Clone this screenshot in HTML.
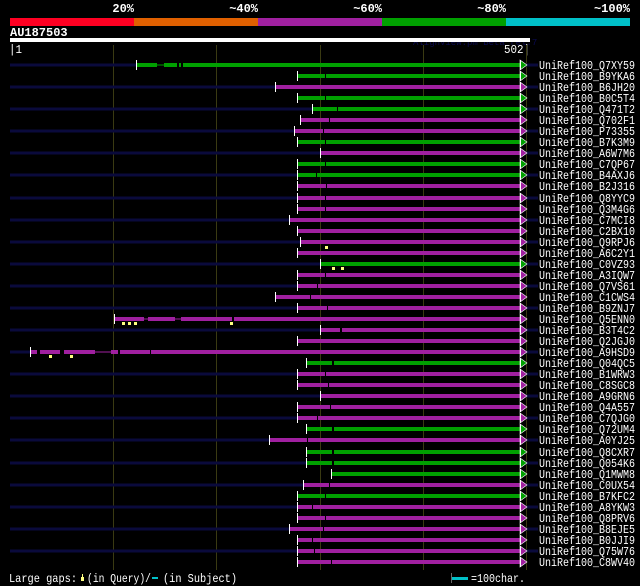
<!DOCTYPE html>
<html><head><meta charset="utf-8"><style>
html,body{margin:0;padding:0;background:#000;width:640px;height:586px;overflow:hidden}
svg{display:block}
text{font-family:"Liberation Mono","DejaVu Sans Mono",monospace;fill:#fff}
.l{font-size:12px}
</style></head><body>
<svg width="640" height="586" viewBox="0 0 640 586" xmlns="http://www.w3.org/2000/svg">
<rect width="640" height="586" fill="#000"/>
<g font-size="12" font-weight="bold">
<text x="134" y="12" text-anchor="end">20%</text>
<text x="258" y="12" text-anchor="end">~40%</text>
<text x="382" y="12" text-anchor="end">~60%</text>
<text x="506" y="12" text-anchor="end">~80%</text>
<text x="630" y="12" text-anchor="end">~100%</text>
</g>
<rect x="10" y="18" width="124" height="8" fill="#ff0022"/>
<rect x="134" y="18" width="124" height="8" fill="#e06000"/>
<rect x="258" y="18" width="124" height="8" fill="#a020a0"/>
<rect x="382" y="18" width="124" height="8" fill="#00a000"/>
<rect x="506" y="18" width="124" height="8" fill="#00c0c8"/>
<text x="10" y="36" font-size="12" font-weight="bold">AU187503</text>
<text x="413" y="45" font-size="9" style="fill:#0a0a50">AlignView.pm Beta rel.7</text>
<rect x="10" y="38" width="520" height="4" fill="#fff"/>
<text x="9" y="53" font-size="12" textLength="13" lengthAdjust="spacingAndGlyphs">|1</text>
<text x="504" y="53" font-size="12" textLength="26" lengthAdjust="spacingAndGlyphs">502|</text>
<g stroke="#3a3a12" stroke-width="1">
<line x1="113.5" y1="45" x2="113.5" y2="570"/>
<line x1="216.5" y1="45" x2="216.5" y2="570"/>
<line x1="320.5" y1="45" x2="320.5" y2="570"/>
<line x1="423.5" y1="45" x2="423.5" y2="570"/>
<line x1="526.5" y1="45" x2="526.5" y2="570"/>
</g>
<defs>
<g id="nv"><rect x="10" y="-1.5" width="528" height="3" fill="#0a0a3c"/></g>
<g id="ag"><polygon points="520,-5 527,0 520,5" fill="#00a000" stroke="#fff" stroke-width="0.6"/><line x1="520.5" y1="-5" x2="520.5" y2="5" stroke="#fff"/></g>
<g id="ap"><polygon points="520,-5 527,0 520,5" fill="#a020a0" stroke="#fff" stroke-width="0.6"/><line x1="520.5" y1="-5" x2="520.5" y2="5" stroke="#fff"/></g>
</defs>
<g class="l">
<g transform="translate(0,65)"><use href="#nv"/><rect x="136" y="-2" width="384" height="4" fill="#00a000"/><rect x="157" y="-2" width="7" height="4" fill="#000"/><rect x="157" y="-0.5" width="7" height="1" fill="#00a000"/><rect x="177" y="-2" width="2" height="4" fill="#000"/><rect x="181" y="-2" width="2" height="4" fill="#000"/><line x1="136.5" y1="-5" x2="136.5" y2="5" stroke="#fff"/><use href="#ag"/><text x="539" y="4" textLength="96" lengthAdjust="spacingAndGlyphs">UniRef100_Q7XY59</text></g>
<g transform="translate(0,76)"><rect x="297" y="-2" width="223" height="4" fill="#00a000"/><rect x="325" y="-2" width="1" height="4" fill="#000"/><line x1="297.5" y1="-5" x2="297.5" y2="5" stroke="#fff"/><use href="#ag"/><text x="539" y="4" textLength="96" lengthAdjust="spacingAndGlyphs">UniRef100_B9YKA6</text></g>
<g transform="translate(0,87)"><use href="#nv"/><rect x="275" y="-2" width="245" height="4" fill="#a020a0"/><line x1="275.5" y1="-5" x2="275.5" y2="5" stroke="#fff"/><use href="#ap"/><text x="539" y="4" textLength="96" lengthAdjust="spacingAndGlyphs">UniRef100_B6JH20</text></g>
<g transform="translate(0,98)"><rect x="297" y="-2" width="223" height="4" fill="#00a000"/><rect x="325" y="-2" width="1" height="4" fill="#000"/><line x1="297.5" y1="-5" x2="297.5" y2="5" stroke="#fff"/><use href="#ag"/><text x="539" y="4" textLength="96" lengthAdjust="spacingAndGlyphs">UniRef100_B0C5T4</text></g>
<g transform="translate(0,109)"><use href="#nv"/><rect x="312" y="-2" width="208" height="4" fill="#00a000"/><rect x="337" y="-2" width="1" height="4" fill="#000"/><line x1="312.5" y1="-5" x2="312.5" y2="5" stroke="#fff"/><use href="#ag"/><text x="539" y="4" textLength="96" lengthAdjust="spacingAndGlyphs">UniRef100_Q471T2</text></g>
<g transform="translate(0,120)"><rect x="300" y="-2" width="220" height="4" fill="#a020a0"/><rect x="329" y="-2" width="1" height="4" fill="#000"/><line x1="300.5" y1="-5" x2="300.5" y2="5" stroke="#fff"/><use href="#ap"/><text x="539" y="4" textLength="96" lengthAdjust="spacingAndGlyphs">UniRef100_Q702F1</text></g>
<g transform="translate(0,131)"><use href="#nv"/><rect x="294" y="-2" width="226" height="4" fill="#a020a0"/><rect x="323" y="-2" width="1" height="4" fill="#000"/><line x1="294.5" y1="-5" x2="294.5" y2="5" stroke="#fff"/><use href="#ap"/><text x="539" y="4" textLength="96" lengthAdjust="spacingAndGlyphs">UniRef100_P73355</text></g>
<g transform="translate(0,142)"><rect x="297" y="-2" width="223" height="4" fill="#00a000"/><rect x="325" y="-2" width="1" height="4" fill="#000"/><line x1="297.5" y1="-5" x2="297.5" y2="5" stroke="#fff"/><use href="#ag"/><text x="539" y="4" textLength="96" lengthAdjust="spacingAndGlyphs">UniRef100_B7K3M9</text></g>
<g transform="translate(0,153)"><use href="#nv"/><rect x="320" y="-2" width="200" height="4" fill="#a020a0"/><line x1="320.5" y1="-5" x2="320.5" y2="5" stroke="#fff"/><use href="#ap"/><text x="539" y="4" textLength="96" lengthAdjust="spacingAndGlyphs">UniRef100_A6W7M6</text></g>
<g transform="translate(0,164)"><rect x="297" y="-2" width="223" height="4" fill="#00a000"/><rect x="325" y="-2" width="1" height="4" fill="#000"/><line x1="297.5" y1="-5" x2="297.5" y2="5" stroke="#fff"/><use href="#ag"/><text x="539" y="4" textLength="96" lengthAdjust="spacingAndGlyphs">UniRef100_C7QP67</text></g>
<g transform="translate(0,175)"><use href="#nv"/><rect x="297" y="-2" width="223" height="4" fill="#00a000"/><rect x="316" y="-2" width="1" height="4" fill="#000"/><line x1="297.5" y1="-5" x2="297.5" y2="5" stroke="#fff"/><use href="#ag"/><text x="539" y="4" textLength="96" lengthAdjust="spacingAndGlyphs">UniRef100_B4AXJ6</text></g>
<g transform="translate(0,186)"><rect x="297" y="-2" width="223" height="4" fill="#a020a0"/><rect x="326" y="-2" width="1" height="4" fill="#000"/><line x1="297.5" y1="-5" x2="297.5" y2="5" stroke="#fff"/><use href="#ap"/><text x="539" y="4" textLength="96" lengthAdjust="spacingAndGlyphs">UniRef100_B2J316</text></g>
<g transform="translate(0,198)"><use href="#nv"/><rect x="297" y="-2" width="223" height="4" fill="#a020a0"/><rect x="325" y="-2" width="1" height="4" fill="#000"/><line x1="297.5" y1="-5" x2="297.5" y2="5" stroke="#fff"/><use href="#ap"/><text x="539" y="4" textLength="96" lengthAdjust="spacingAndGlyphs">UniRef100_Q8YYC9</text></g>
<g transform="translate(0,209)"><rect x="297" y="-2" width="223" height="4" fill="#a020a0"/><rect x="325" y="-2" width="1" height="4" fill="#000"/><line x1="297.5" y1="-5" x2="297.5" y2="5" stroke="#fff"/><use href="#ap"/><text x="539" y="4" textLength="96" lengthAdjust="spacingAndGlyphs">UniRef100_Q3M4G6</text></g>
<g transform="translate(0,220)"><use href="#nv"/><rect x="289" y="-2" width="231" height="4" fill="#a020a0"/><line x1="289.5" y1="-5" x2="289.5" y2="5" stroke="#fff"/><use href="#ap"/><text x="539" y="4" textLength="96" lengthAdjust="spacingAndGlyphs">UniRef100_C7MCI8</text></g>
<g transform="translate(0,231)"><rect x="297" y="-2" width="223" height="4" fill="#a020a0"/><line x1="297.5" y1="-5" x2="297.5" y2="5" stroke="#fff"/><use href="#ap"/><text x="539" y="4" textLength="96" lengthAdjust="spacingAndGlyphs">UniRef100_C2BX10</text></g>
<g transform="translate(0,242)"><use href="#nv"/><rect x="300" y="-2" width="220" height="4" fill="#a020a0"/><line x1="300.5" y1="-5" x2="300.5" y2="5" stroke="#fff"/><use href="#ap"/><text x="539" y="4" textLength="96" lengthAdjust="spacingAndGlyphs">UniRef100_Q9RPJ6</text></g>
<g transform="translate(0,253)"><rect x="297" y="-2" width="223" height="4" fill="#a020a0"/><line x1="297.5" y1="-5" x2="297.5" y2="5" stroke="#fff"/><rect x="325" y="-7" width="3" height="3" fill="#ffff80"/><use href="#ap"/><text x="539" y="4" textLength="96" lengthAdjust="spacingAndGlyphs">UniRef100_A6C2Y1</text></g>
<g transform="translate(0,264)"><use href="#nv"/><rect x="320" y="-2" width="200" height="4" fill="#00a000"/><line x1="320.5" y1="-5" x2="320.5" y2="5" stroke="#fff"/><rect x="332" y="3" width="3" height="3" fill="#ffff80"/><rect x="341" y="3" width="3" height="3" fill="#ffff80"/><use href="#ag"/><text x="539" y="4" textLength="96" lengthAdjust="spacingAndGlyphs">UniRef100_C0VZ93</text></g>
<g transform="translate(0,275)"><rect x="297" y="-2" width="223" height="4" fill="#a020a0"/><rect x="325" y="-2" width="1" height="4" fill="#000"/><line x1="297.5" y1="-5" x2="297.5" y2="5" stroke="#fff"/><use href="#ap"/><text x="539" y="4" textLength="96" lengthAdjust="spacingAndGlyphs">UniRef100_A3IQW7</text></g>
<g transform="translate(0,286)"><use href="#nv"/><rect x="297" y="-2" width="223" height="4" fill="#a020a0"/><rect x="317" y="-2" width="1" height="4" fill="#000"/><line x1="297.5" y1="-5" x2="297.5" y2="5" stroke="#fff"/><use href="#ap"/><text x="539" y="4" textLength="96" lengthAdjust="spacingAndGlyphs">UniRef100_Q7VS61</text></g>
<g transform="translate(0,297)"><rect x="275" y="-2" width="245" height="4" fill="#a020a0"/><rect x="310" y="-2" width="1" height="4" fill="#000"/><line x1="275.5" y1="-5" x2="275.5" y2="5" stroke="#fff"/><use href="#ap"/><text x="539" y="4" textLength="96" lengthAdjust="spacingAndGlyphs">UniRef100_C1CWS4</text></g>
<g transform="translate(0,308)"><use href="#nv"/><rect x="297" y="-2" width="223" height="4" fill="#a020a0"/><rect x="327" y="-2" width="1" height="4" fill="#000"/><line x1="297.5" y1="-5" x2="297.5" y2="5" stroke="#fff"/><use href="#ap"/><text x="539" y="4" textLength="96" lengthAdjust="spacingAndGlyphs">UniRef100_B9ZNJ7</text></g>
<g transform="translate(0,319)"><rect x="114" y="-2" width="406" height="4" fill="#a020a0"/><rect x="144" y="-2" width="4" height="4" fill="#000"/><rect x="144" y="-0.5" width="4" height="1" fill="#a020a0"/><rect x="175" y="-2" width="6" height="4" fill="#000"/><rect x="175" y="-0.5" width="6" height="1" fill="#a020a0"/><rect x="232" y="-2" width="2" height="4" fill="#000"/><line x1="114.5" y1="-5" x2="114.5" y2="5" stroke="#fff"/><rect x="122" y="3" width="3" height="3" fill="#ffff80"/><rect x="128" y="3" width="3" height="3" fill="#ffff80"/><rect x="134" y="3" width="3" height="3" fill="#ffff80"/><rect x="230" y="3" width="3" height="3" fill="#ffff80"/><use href="#ap"/><text x="539" y="4" textLength="96" lengthAdjust="spacingAndGlyphs">UniRef100_Q5ENN0</text></g>
<g transform="translate(0,330)"><use href="#nv"/><rect x="320" y="-2" width="200" height="4" fill="#a020a0"/><rect x="340" y="-2" width="2" height="4" fill="#000"/><line x1="320.5" y1="-5" x2="320.5" y2="5" stroke="#fff"/><use href="#ap"/><text x="539" y="4" textLength="96" lengthAdjust="spacingAndGlyphs">UniRef100_B3T4C2</text></g>
<g transform="translate(0,341)"><rect x="297" y="-2" width="223" height="4" fill="#a020a0"/><line x1="297.5" y1="-5" x2="297.5" y2="5" stroke="#fff"/><use href="#ap"/><text x="539" y="4" textLength="96" lengthAdjust="spacingAndGlyphs">UniRef100_Q2JGJ0</text></g>
<g transform="translate(0,352)"><use href="#nv"/><rect x="30" y="-2" width="490" height="4" fill="#a020a0"/><rect x="37" y="-2" width="3" height="4" fill="#000"/><rect x="60" y="-2" width="4" height="4" fill="#000"/><rect x="95" y="-2" width="16" height="4" fill="#000"/><rect x="95" y="-0.5" width="16" height="1" fill="#a020a0"/><rect x="118" y="-2" width="2" height="4" fill="#000"/><rect x="150" y="-2" width="1" height="4" fill="#000"/><line x1="30.5" y1="-5" x2="30.5" y2="5" stroke="#fff"/><rect x="49" y="3" width="3" height="3" fill="#ffff80"/><rect x="70" y="3" width="3" height="3" fill="#ffff80"/><use href="#ap"/><text x="539" y="4" textLength="96" lengthAdjust="spacingAndGlyphs">UniRef100_A9HSD9</text></g>
<g transform="translate(0,363)"><rect x="306" y="-2" width="214" height="4" fill="#00a000"/><rect x="332" y="-2" width="2" height="4" fill="#000"/><line x1="306.5" y1="-5" x2="306.5" y2="5" stroke="#fff"/><use href="#ag"/><text x="539" y="4" textLength="96" lengthAdjust="spacingAndGlyphs">UniRef100_Q04QC5</text></g>
<g transform="translate(0,374)"><use href="#nv"/><rect x="297" y="-2" width="223" height="4" fill="#a020a0"/><rect x="325" y="-2" width="1" height="4" fill="#000"/><line x1="297.5" y1="-5" x2="297.5" y2="5" stroke="#fff"/><use href="#ap"/><text x="539" y="4" textLength="96" lengthAdjust="spacingAndGlyphs">UniRef100_B1WRW3</text></g>
<g transform="translate(0,385)"><rect x="297" y="-2" width="223" height="4" fill="#a020a0"/><rect x="328" y="-2" width="1" height="4" fill="#000"/><line x1="297.5" y1="-5" x2="297.5" y2="5" stroke="#fff"/><use href="#ap"/><text x="539" y="4" textLength="96" lengthAdjust="spacingAndGlyphs">UniRef100_C8SGC8</text></g>
<g transform="translate(0,396)"><use href="#nv"/><rect x="320" y="-2" width="200" height="4" fill="#a020a0"/><line x1="320.5" y1="-5" x2="320.5" y2="5" stroke="#fff"/><use href="#ap"/><text x="539" y="4" textLength="96" lengthAdjust="spacingAndGlyphs">UniRef100_A9GRN6</text></g>
<g transform="translate(0,407)"><rect x="297" y="-2" width="223" height="4" fill="#a020a0"/><rect x="330" y="-2" width="1" height="4" fill="#000"/><line x1="297.5" y1="-5" x2="297.5" y2="5" stroke="#fff"/><use href="#ap"/><text x="539" y="4" textLength="96" lengthAdjust="spacingAndGlyphs">UniRef100_Q4A557</text></g>
<g transform="translate(0,418)"><use href="#nv"/><rect x="297" y="-2" width="223" height="4" fill="#a020a0"/><rect x="317" y="-2" width="1" height="4" fill="#000"/><line x1="297.5" y1="-5" x2="297.5" y2="5" stroke="#fff"/><use href="#ap"/><text x="539" y="4" textLength="96" lengthAdjust="spacingAndGlyphs">UniRef100_C7QJG0</text></g>
<g transform="translate(0,429)"><rect x="306" y="-2" width="214" height="4" fill="#00a000"/><rect x="332" y="-2" width="2" height="4" fill="#000"/><line x1="306.5" y1="-5" x2="306.5" y2="5" stroke="#fff"/><use href="#ag"/><text x="539" y="4" textLength="96" lengthAdjust="spacingAndGlyphs">UniRef100_Q72UM4</text></g>
<g transform="translate(0,440)"><use href="#nv"/><rect x="269" y="-2" width="251" height="4" fill="#a020a0"/><rect x="307" y="-2" width="1" height="4" fill="#000"/><line x1="269.5" y1="-5" x2="269.5" y2="5" stroke="#fff"/><use href="#ap"/><text x="539" y="4" textLength="96" lengthAdjust="spacingAndGlyphs">UniRef100_A0YJ25</text></g>
<g transform="translate(0,452)"><rect x="306" y="-2" width="214" height="4" fill="#00a000"/><rect x="332" y="-2" width="2" height="4" fill="#000"/><line x1="306.5" y1="-5" x2="306.5" y2="5" stroke="#fff"/><use href="#ag"/><text x="539" y="4" textLength="96" lengthAdjust="spacingAndGlyphs">UniRef100_Q8CXR7</text></g>
<g transform="translate(0,463)"><use href="#nv"/><rect x="306" y="-2" width="214" height="4" fill="#00a000"/><rect x="332" y="-2" width="2" height="4" fill="#000"/><line x1="306.5" y1="-5" x2="306.5" y2="5" stroke="#fff"/><use href="#ag"/><text x="539" y="4" textLength="96" lengthAdjust="spacingAndGlyphs">UniRef100_Q054K6</text></g>
<g transform="translate(0,474)"><rect x="331" y="-2" width="189" height="4" fill="#00a000"/><line x1="331.5" y1="-5" x2="331.5" y2="5" stroke="#fff"/><use href="#ag"/><text x="539" y="4" textLength="96" lengthAdjust="spacingAndGlyphs">UniRef100_Q1MWM8</text></g>
<g transform="translate(0,485)"><use href="#nv"/><rect x="303" y="-2" width="217" height="4" fill="#a020a0"/><rect x="329" y="-2" width="1" height="4" fill="#000"/><line x1="303.5" y1="-5" x2="303.5" y2="5" stroke="#fff"/><use href="#ap"/><text x="539" y="4" textLength="96" lengthAdjust="spacingAndGlyphs">UniRef100_C0UX54</text></g>
<g transform="translate(0,496)"><rect x="297" y="-2" width="223" height="4" fill="#00a000"/><rect x="325" y="-2" width="1" height="4" fill="#000"/><line x1="297.5" y1="-5" x2="297.5" y2="5" stroke="#fff"/><use href="#ag"/><text x="539" y="4" textLength="96" lengthAdjust="spacingAndGlyphs">UniRef100_B7KFC2</text></g>
<g transform="translate(0,507)"><use href="#nv"/><rect x="297" y="-2" width="223" height="4" fill="#a020a0"/><rect x="312" y="-2" width="1" height="4" fill="#000"/><line x1="297.5" y1="-5" x2="297.5" y2="5" stroke="#fff"/><use href="#ap"/><text x="539" y="4" textLength="96" lengthAdjust="spacingAndGlyphs">UniRef100_A8YKW3</text></g>
<g transform="translate(0,518)"><rect x="297" y="-2" width="223" height="4" fill="#a020a0"/><rect x="325" y="-2" width="1" height="4" fill="#000"/><line x1="297.5" y1="-5" x2="297.5" y2="5" stroke="#fff"/><use href="#ap"/><text x="539" y="4" textLength="96" lengthAdjust="spacingAndGlyphs">UniRef100_Q8PRV6</text></g>
<g transform="translate(0,529)"><use href="#nv"/><rect x="289" y="-2" width="231" height="4" fill="#a020a0"/><rect x="323" y="-2" width="1" height="4" fill="#000"/><line x1="289.5" y1="-5" x2="289.5" y2="5" stroke="#fff"/><use href="#ap"/><text x="539" y="4" textLength="96" lengthAdjust="spacingAndGlyphs">UniRef100_B8EJE5</text></g>
<g transform="translate(0,540)"><rect x="297" y="-2" width="223" height="4" fill="#a020a0"/><rect x="312" y="-2" width="1" height="4" fill="#000"/><line x1="297.5" y1="-5" x2="297.5" y2="5" stroke="#fff"/><use href="#ap"/><text x="539" y="4" textLength="96" lengthAdjust="spacingAndGlyphs">UniRef100_B0JJI9</text></g>
<g transform="translate(0,551)"><use href="#nv"/><rect x="297" y="-2" width="223" height="4" fill="#a020a0"/><rect x="314" y="-2" width="1" height="4" fill="#000"/><line x1="297.5" y1="-5" x2="297.5" y2="5" stroke="#fff"/><use href="#ap"/><text x="539" y="4" textLength="96" lengthAdjust="spacingAndGlyphs">UniRef100_Q75W76</text></g>
<g transform="translate(0,562)"><rect x="297" y="-2" width="223" height="4" fill="#a020a0"/><rect x="331" y="-2" width="1" height="4" fill="#000"/><line x1="297.5" y1="-5" x2="297.5" y2="5" stroke="#fff"/><use href="#ap"/><text x="539" y="4" textLength="96" lengthAdjust="spacingAndGlyphs">UniRef100_C8WV40</text></g>
</g>
<text x="9" y="582" font-size="12" textLength="68" lengthAdjust="spacingAndGlyphs">Large gaps:</text>
<rect x="82" y="574" width="1" height="4" fill="#ffff80"/><rect x="81" y="577" width="3" height="4" fill="#ffff80"/>
<text x="87" y="582" font-size="12" textLength="64" lengthAdjust="spacingAndGlyphs">(in Query)/</text>
<rect x="152" y="577" width="6" height="2" fill="#00c0c8"/>
<text x="163" y="582" font-size="12" textLength="74" lengthAdjust="spacingAndGlyphs">(in Subject)</text>
<rect x="451" y="577" width="17" height="3" fill="#00c0c8"/>
<line x1="451.5" y1="573" x2="451.5" y2="583" stroke="#666"/>
<text x="471" y="582" font-size="12" textLength="54" lengthAdjust="spacingAndGlyphs">=100char.</text>
</svg>
</body></html>
